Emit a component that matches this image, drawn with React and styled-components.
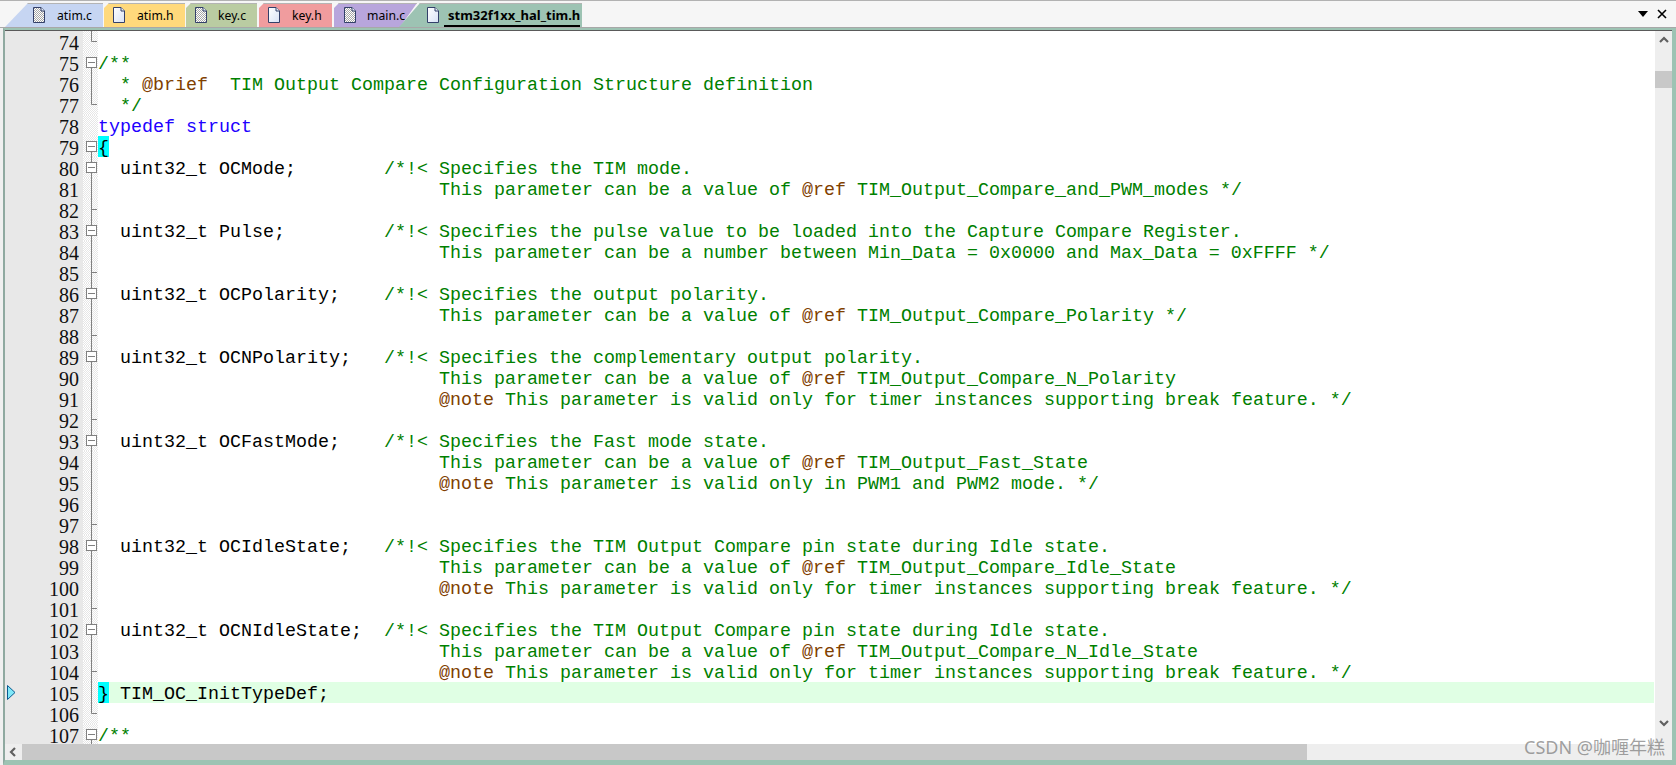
import React from "react";
import styled, { createGlobalStyle } from "styled-components";

const Global = createGlobalStyle`
  html, body { margin: 0; padding: 0; background: #f0f0f0; overflow: hidden; }
  #root { width: 1676px; height: 765px; }
`;

const Page = styled.div`
  width: 1676px;
  height: 765px;
  display: flex;
  flex-direction: column;
  position: relative;
  overflow: hidden;
`;

const TabStrip = styled.div`
  height: 26px;
  flex: none;
  display: flex;
  align-items: flex-end;
  background: #f6f6f6;
  border-top: 1px solid #b2b2b2;
  border-bottom: 1px solid #a8a8a8;
  padding-left: 5px;
`;

const Tab = styled.div`
  height: 24px;
  width: ${(p) => p.$w}px;
  margin-left: ${(p) => p.$ml || 0}px;
  padding-left: ${(p) => p.$pl}px;
  box-sizing: border-box;
  display: flex;
  align-items: center;
  gap: ${(p) => p.$gap}px;
  flex: none;
  background: ${(p) => p.$bg};
  box-shadow: inset 0 1px #b4b4b4;
  clip-path: ${(p) => p.$clip};
  z-index: ${(p) => p.$z || 0};
  font-family: "Noto Sans", sans-serif;
  font-size: ${(p) => (p.$active ? "13px" : "12.2px")};
  font-weight: ${(p) => (p.$active ? 700 : 400)};
  color: #000;
  white-space: nowrap;
`;

const TabLabel = styled.span`
  line-height: 20px;
  height: 20px;
  margin-top: 2px;
  border-bottom: ${(p) => (p.$active ? "2px solid #000" : "0")};
  padding: ${(p) => (p.$active ? "0 0 0 4px" : "0")};
  margin-left: ${(p) => (p.$active ? "-4px" : "0")};
`;

const StripControls = styled.div`
  margin-left: auto;
  align-self: center;
  display: flex;
  align-items: center;
  gap: 9px;
  padding-right: 9px;
`;

const Frame = styled.div`
  flex: 1;
  min-height: 0;
  display: flex;
  flex-direction: column;
  margin-left: 3px;
  border-left: 2px solid #8fa9a0;
  border-top: 2px solid #9dc3b3;
  border-right: 4px solid #9dc3b3;
  border-bottom: 5px solid #9dc3b3;
`;

const EditorArea = styled.div`
  flex: 1;
  min-height: 0;
  display: flex;
  border-top: 1px solid #5a5a5a;
`;

const Lines = styled.div`
  flex: 1;
  min-width: 0;
  overflow: hidden;
  background: #fff;
`;

const Row = styled.div`
  height: 21px;
  display: flex;
`;

const Gutter = styled.div`
  width: 78px;
  flex: none;
  display: flex;
  align-items: flex-start;
  background: #e8e8e8;
  box-sizing: border-box;
  padding-right: 4px;
`;

const MarkerSlot = styled.div`
  width: 20px;
  height: 21px;
  padding-left: 2px;
  flex: none;
  display: flex;
  align-items: center;
`;

const LineNumber = styled.span`
  flex: 1;
  text-align: right;
  font-family: "Liberation Serif", serif;
  font-size: 20px;
  line-height: 21px;
  padding-top: 1px;
  transform: scaleY(1.1);
  color: #101010;
`;

const FoldCell = styled.div`
  width: 15px;
  flex: none;
  background-color: #fff;
  background-image: conic-gradient(#e6e6e6 25%, #fff 0 50%, #e6e6e6 0 75%, #fff 0);
  background-size: 2px 2px;
  display: flex;
`;

const Code = styled.div`
  flex: 1;
  min-width: 0;
  margin-right: 1px;
  background: ${(p) => (p.$current ? "#e0ffe4" : "#fff")};
  font-family: "Liberation Mono", monospace;
  font-size: 18.33px;
  line-height: 25px;
  white-space: pre;
  color: #000;
`;

const Token = styled.span`
  color: ${(p) => ({ comment: "#008000", tag: "#804000", keyword: "#2000ff", text: "#000" }[p.$tone])};
`;

const Brace = styled.span`
  display: inline-block;
  height: 21px;
  vertical-align: top;
  background: #00ffff;
  color: #000;
`;

const VScroll = styled.div`
  width: 17px;
  flex: none;
  background: #eeeeee;
  display: flex;
  flex-direction: column;
  align-items: center;
`;

const VThumb = styled.div`
  width: 100%;
  height: 17px;
  margin-top: 20px;
  background: #c8c8c8;
`;

const ScrollEndUp = styled.div`
  height: 20px;
  display: flex;
  align-items: center;
  justify-content: center;
  flex: none;
`;

const ScrollEndDown = styled(ScrollEndUp)`
  margin-top: auto;
  height: 20px;
  align-items: flex-start;
  margin-bottom: 0;
  padding-bottom: 5px;
`;

const HScroll = styled.div`
  height: 16px;
  flex: none;
  background: #eeeeee;
  display: flex;
  align-items: center;
`;

const HArrow = styled.div`
  width: 17px;
  flex: none;
  display: flex;
  justify-content: center;
`;

const HThumb = styled.div`
  width: 1285px;
  height: 100%;
  background: #c8c8c8;
`;

const Watermark = styled.div`
  position: absolute;
  left: 1524px;
  top: 737px;
  font-family: "Noto Sans", "Noto Sans CJK SC", sans-serif;
  font-size: 18px;
  line-height: 20px;
  color: rgba(100, 100, 100, 0.6);
  white-space: nowrap;
`;

const FileIcon = ({ hatched }) => (
  <svg width="12" height="16" viewBox="0 0 12 16">
    <defs>
      <pattern id="hatch" width="2" height="2" patternUnits="userSpaceOnUse">
        <rect width="2" height="2" fill="#fff" />
        <rect width="1" height="1" fill="#a8a8a8" />
        <rect x="1" y="1" width="1" height="1" fill="#a8a8a8" />
      </pattern>
      <linearGradient id="sheet" x1="0" y1="0" x2="1" y2="1">
        <stop offset="0" stopColor="#ffffff" />
        <stop offset="1" stopColor="#d8e2f6" />
      </linearGradient>
    </defs>
    <path d="M.5.5H8L11.5 4V15.5H.5Z" fill={hatched ? "url(#hatch)" : "url(#sheet)"} stroke="#33406a" />
    <path d="M8 .5V4H11.5" fill="#e8eef8" stroke="#33406a" />
  </svg>
);

const Chevron = ({ dir }) => {
  const d = {
    up: "M1 6L5 2L9 6",
    down: "M1 2L5 6L9 2",
    left: "M6 1L2 5L6 9",
  }[dir];
  return (
    <svg width="10" height="10" viewBox="0 0 10 10">
      <path d={d} fill="none" stroke="#606060" strokeWidth="2.2" />
    </svg>
  );
};

const FoldMark = ({ kind }) => {
  const topOpen = kind === "open";
  const line = kind !== "none";
  const stopsAtTick = kind === "end";
  const boxed = kind === "open" || kind === "box";
  const ticked = kind === "tick" || kind === "end";
  return (
    <svg width="15" height="21" viewBox="0 0 15 21">
      {line && (
        <path
          d={`M8.5 ${topOpen ? 10 : 0}V${stopsAtTick ? 10.5 : 21}`}
          stroke="#808080"
          fill="none"
        />
      )}
      {ticked && <path d="M8.5 10.5H14" stroke="#808080" fill="none" />}
      {boxed && (
        <>
          <rect x="3.5" y="5.5" width="10" height="10" fill="#fff" stroke="#808080" />
          <path d="M5 10.5H12" stroke="#808080" fill="none" />
        </>
      )}
    </svg>
  );
};

const pad = (s) => s.padEnd(26, " ");
const indent = " ".repeat(31);

const Comment = ({ text }) =>
  text.split(/(@\w+)/).map((part, i) =>
    part.startsWith("@") ? (
      <Token key={i} $tone="tag">{part}</Token>
    ) : (
      <Token key={i} $tone="comment">{part}</Token>
    )
  );

const lines = [
  { n: 74, fold: "end" },
  { n: 75, fold: "open", c: "/**" },
  { n: 76, fold: "line", c: "  * @brief  TIM Output Compare Configuration Structure definition" },
  { n: 77, fold: "end", c: "  */" },
  { n: 78, fold: "none", k: "typedef struct" },
  { n: 79, fold: "open", brace: "{" },
  { n: 80, fold: "box", t: pad("  uint32_t OCMode;"), c: "/*!< Specifies the TIM mode." },
  { n: 81, fold: "line", c: indent + "This parameter can be a value of @ref TIM_Output_Compare_and_PWM_modes */" },
  { n: 82, fold: "tick" },
  { n: 83, fold: "box", t: pad("  uint32_t Pulse;"), c: "/*!< Specifies the pulse value to be loaded into the Capture Compare Register." },
  { n: 84, fold: "line", c: indent + "This parameter can be a number between Min_Data = 0x0000 and Max_Data = 0xFFFF */" },
  { n: 85, fold: "tick" },
  { n: 86, fold: "box", t: pad("  uint32_t OCPolarity;"), c: "/*!< Specifies the output polarity." },
  { n: 87, fold: "line", c: indent + "This parameter can be a value of @ref TIM_Output_Compare_Polarity */" },
  { n: 88, fold: "tick" },
  { n: 89, fold: "box", t: pad("  uint32_t OCNPolarity;"), c: "/*!< Specifies the complementary output polarity." },
  { n: 90, fold: "line", c: indent + "This parameter can be a value of @ref TIM_Output_Compare_N_Polarity" },
  { n: 91, fold: "line", c: indent + "@note This parameter is valid only for timer instances supporting break feature. */" },
  { n: 92, fold: "tick" },
  { n: 93, fold: "box", t: pad("  uint32_t OCFastMode;"), c: "/*!< Specifies the Fast mode state." },
  { n: 94, fold: "line", c: indent + "This parameter can be a value of @ref TIM_Output_Fast_State" },
  { n: 95, fold: "line", c: indent + "@note This parameter is valid only in PWM1 and PWM2 mode. */" },
  { n: 96, fold: "line" },
  { n: 97, fold: "tick" },
  { n: 98, fold: "box", t: pad("  uint32_t OCIdleState;"), c: "/*!< Specifies the TIM Output Compare pin state during Idle state." },
  { n: 99, fold: "line", c: indent + "This parameter can be a value of @ref TIM_Output_Compare_Idle_State" },
  { n: 100, fold: "line", c: indent + "@note This parameter is valid only for timer instances supporting break feature. */" },
  { n: 101, fold: "tick" },
  { n: 102, fold: "box", t: pad("  uint32_t OCNIdleState;"), c: "/*!< Specifies the TIM Output Compare pin state during Idle state." },
  { n: 103, fold: "line", c: indent + "This parameter can be a value of @ref TIM_Output_Compare_N_Idle_State" },
  { n: 104, fold: "tick", c: indent + "@note This parameter is valid only for timer instances supporting break feature. */" },
  { n: 105, fold: "line", brace: "}", t: " TIM_OC_InitTypeDef;", current: true },
  { n: 106, fold: "end" },
  { n: 107, fold: "open", c: "/**" },
];

const notch = "polygon(5px 0, 100% 0, 100% 100%, 0 100%, 0 5px)";
const tabs = [
  { label: "atim.c", w: 98, pl: 28, gap: 12, bg: "#c6d5f2", hatched: true, clip: "polygon(23px 0, 100% 0, 100% 100%, 0 100%)" },
  { label: "atim.h", w: 81, ml: 1, pl: 9, gap: 12, bg: "#ffd97c", clip: notch },
  { label: "key.c", w: 71, ml: 1, pl: 9, gap: 11, bg: "#bacca2", hatched: true, clip: notch },
  { label: "key.h", w: 73, ml: 2, pl: 9, gap: 12, bg: "#f09c9e", clip: notch },
  { label: "main.c", w: 83, ml: 2, pl: 10, gap: 11, bg: "#b8a6dc", hatched: true, clip: "polygon(5px 0, 100% 0, 66px 100%, 0 100%, 0 5px)" },
  { label: "stm32f1xx_hal_tim.h", w: 183, ml: -18, pl: 28, gap: 9, bg: "#9dc3b3", active: true, z: 1, clip: "polygon(21px 0, 100% 0, 100% 100%, 0 100%)" },
];

export default function App() {
  return (
    <Page>
      <Global />
      <TabStrip>
        {tabs.map((t) => (
          <Tab key={t.label} $w={t.w} $ml={t.ml} $pl={t.pl} $gap={t.gap} $bg={t.bg} $clip={t.clip} $z={t.z} $active={t.active}>
            <FileIcon hatched={t.hatched} />
            <TabLabel $active={t.active}>{t.label}</TabLabel>
          </Tab>
        ))}
        <StripControls>
          <svg width="10" height="6" viewBox="0 0 10 6"><path d="M0 0H10L5 6Z" fill="#000" /></svg>
          <svg width="10" height="10" viewBox="0 0 10 10"><path d="M1 1L9 9M9 1L1 9" stroke="#000" strokeWidth="1.6" fill="none" /></svg>
        </StripControls>
      </TabStrip>
      <Frame>
        <EditorArea>
          <Lines>
            {lines.map((l) => (
              <Row key={l.n}>
                <Gutter>
                  <MarkerSlot>
                    {l.current && (
                      <svg width="9" height="15" viewBox="0 0 9 15">
                        <path d="M.5.5L8 7.5L.5 14.5Z" fill="#7fe8f8" stroke="#0a5a90" />
                      </svg>
                    )}
                  </MarkerSlot>
                  <LineNumber>{l.n}</LineNumber>
                </Gutter>
                <FoldCell><FoldMark kind={l.fold} /></FoldCell>
                <Code $current={l.current}>
                  {l.brace && <Brace>{l.brace}</Brace>}
                  {l.k && <Token $tone="keyword">{l.k}</Token>}
                  {l.t && <Token $tone="text">{l.t}</Token>}
                  {l.c && <Comment text={l.c} />}
                </Code>
              </Row>
            ))}
          </Lines>
          <VScroll>
            <ScrollEndUp><Chevron dir="up" /></ScrollEndUp>
            <VThumb />
            <ScrollEndDown><Chevron dir="down" /></ScrollEndDown>
          </VScroll>
        </EditorArea>
        <HScroll>
          <HArrow><Chevron dir="left" /></HArrow>
          <HThumb />
        </HScroll>
      </Frame>
      <Watermark>CSDN @咖喱年糕</Watermark>
    </Page>
  );
}
